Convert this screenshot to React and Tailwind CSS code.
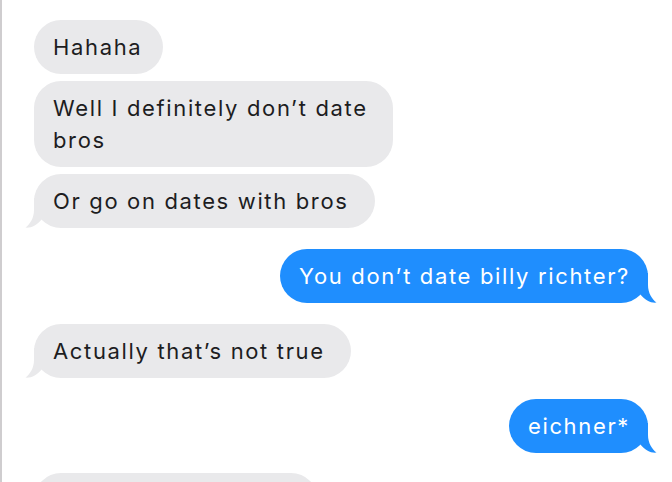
import React from "react";

const GRAY = "#e9e9eb";
const BLUE = "#1f8efe";

function Tail({ color, side }) {
  return (
    <svg
      width="20"
      height="30"
      viewBox="0 0 20 30"
      className={
        side === "left"
          ? "absolute left-[-9px] bottom-0"
          : "absolute right-[-9px] bottom-0 -scale-x-100"
      }
    >
      <path
        d="M9 0 L9 12 C9 20 5 26 0.5 29.6 C6 30.2 12 27.5 17 21 L17 0 Z"
        fill={color}
      />
    </svg>
  );
}

function Bubble({ children, me, tail, className = "pr-[18px]" }) {
  return (
    <div
      className={
        "relative rounded-[27px] pl-[19px] py-[11px] text-[22px] leading-[32px] tracking-[1.65px] " +
        (me ? "bg-[#1f8efe] text-white self-end" : "bg-[#e9e9eb] text-[#1d1d1f] self-start") +
        " " +
        className
      }
    >
      {tail && <Tail color={me ? BLUE : GRAY} side={me ? "right" : "left"} />}
      <span className="relative">{children}</span>
    </div>
  );
}

export default function App() {
  return (
    <div
      className="w-[672px] h-[482px] overflow-hidden bg-white border-l-2 border-[#cfcdcf] flex flex-col pl-[32px] pr-[24px] pt-[20px]"
      style={{ fontFamily: "Inter, 'Noto Sans', sans-serif" }}
    >
      <div className="flex flex-col gap-[7px]">
        <Bubble className="pr-[21px]">Hahaha</Bubble>
        <Bubble className="w-[359px] pr-[18px]">Well I definitely don’t date bros</Bubble>
        <Bubble tail className="pr-[26px]">Or go on dates with bros</Bubble>
      </div>
      <div className="flex flex-col mt-[21px]">
        <Bubble me tail>You don’t date billy richter?</Bubble>
      </div>
      <div className="flex flex-col mt-[21px]">
        <Bubble tail className="pr-[26px]">Actually that’s not true</Bubble>
      </div>
      <div className="flex flex-col mt-[21px]">
        <Bubble me tail>eichner*</Bubble>
      </div>
      <div className="flex flex-col mt-[20px]">
        <div className="w-[284px] h-[54px] rounded-[27px] bg-[#e9e9eb] shrink-0" />
      </div>
    </div>
  );
}
